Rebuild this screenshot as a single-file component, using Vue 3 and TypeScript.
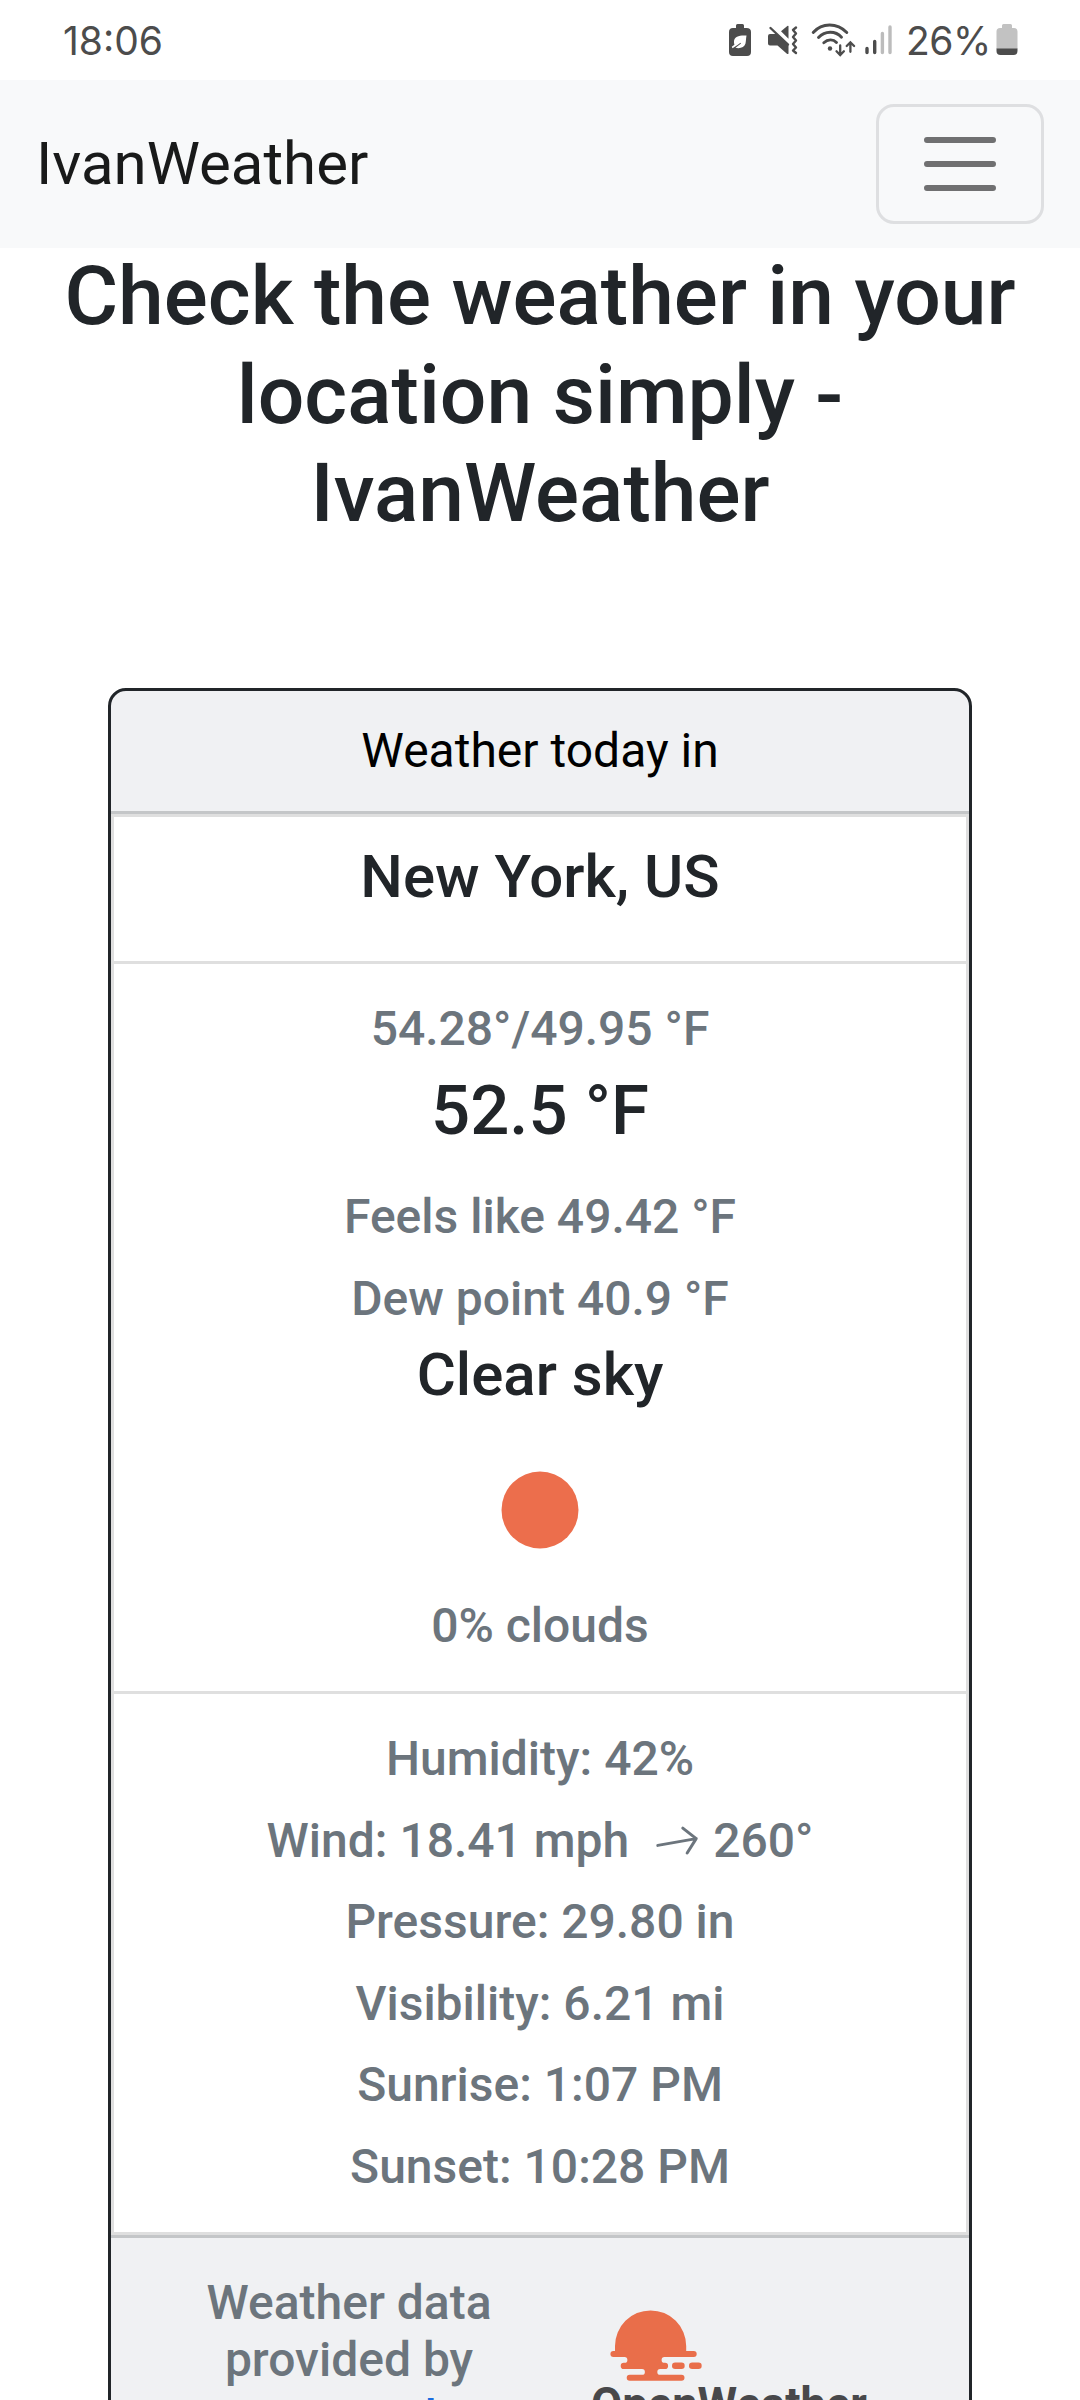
<script setup lang="ts">
const temperatures: string[] = ['Feels like 49.42 °F', 'Dew point 40.9 °F']
const sunTimes: string[] = [
  'Pressure: 29.80 in',
  'Visibility: 6.21 mi',
  'Sunrise: 1:07 PM',
  'Sunset: 10:28 PM',
]
</script>

<template>
  <div class="screen">
    <div class="status">
      <span class="clock">18:06</span>
      <svg class="status-icons" width="176" height="40" viewBox="0 0 176 40" fill="none">
        <!-- battery saver -->
        <path
          fill="#4c4c4c"
          d="M10 4.500q0-1.500 1.500-1.500h5q1.500 0 1.500 1.500V7h2.500Q25 7 25 11v20q0 4-4 4H7q-4 0-4-4V11q0-4 4-4h3z"
        />
        <path fill="#fff" d="M20.500 14.500c-7-.5-12 1-12.500 5.500-.1 1.500 0 2.700.4 3.800l-2.600 2 .7 1.400 5-3.200 3-2.300.5.800-5.500 4.300c4.500 1.200 9-.5 10-4.300.6-2.500.4-5 1-8z" />
        <g transform="translate(2 0)">
          <!-- muted, vibrating -->
          <path fill="#4c4c4c" d="M42 13h6.500L60.500 23.500V32.500q-.6 1-1.600.2L49.500 24.500H42q-2 0-2-2V15q0-2 2-2z" />
          <path fill="#4c4c4c" d="M53 10.200L59.300 5q1.200-.6 1.200.6v12.200z" />
          <path stroke="#4c4c4c" stroke-width="2.400" stroke-linecap="round" d="M42.500 7L60 23.500" />
          <path stroke="#4c4c4c" stroke-width="2.400" stroke-linecap="round" stroke-linejoin="round" d="M68 6.500l-3 2.500 3 3.500-3 3.500 3 3.500-3 3.500 3 3.500-3 3 3 2.500" />
          <!-- wifi -->
          <g stroke="#4c4c4c" stroke-width="2.900" stroke-linecap="round">
            <path d="M85.200 11.500C94 1.500 109 1.500 118.800 11.500" />
            <path d="M90.500 16.500c6.500-7 17-7 23-.3" />
            <path d="M95.800 21.700c4-3.700 9.500-3.700 12.700-.3" />
            <path stroke-width="2.300" d="M112.200 24.500v9m-3.700-3.200l3.700 3.700 3.700-3.700M122.400 30.800v-9m-3.700 3.200l3.700-3.700 3.700 3.700" />
          </g>
          <circle cx="102" cy="27.500" r="2.200" fill="#4c4c4c" />
          <!-- signal -->
          <g stroke-width="3.400" stroke-linecap="round">
            <path stroke="#4c4c4c" d="M139 27.500v4M146.700 20.500v11" />
            <path stroke="#bcbcbc" d="M154.400 12.500v19M162 6v25.500" />
          </g>
        </g>
      </svg>
      <span class="percent">26%</span>
      <svg class="battery" width="22" height="32" viewBox="0 0 22 32">
        <path
          fill="#c2c2c2"
          d="M6 1.500Q6 0 7.500 0h7Q16 0 16 1.500V4h2Q21.500 4 21.500 7.500V25h-21V7.500Q.5 4 4 4h2z"
        />
        <path fill="#4c4c4c" d="M.5 24.500h21V27q0 4-4 4h-13q-4 0-4-4z" />
      </svg>
    </div>

    <nav class="navbar">
      <span class="brand">IvanWeather</span>
      <button class="toggler" type="button" aria-label="Toggle navigation">
        <svg width="90" height="90" viewBox="0 0 30 30">
          <path
            stroke="rgba(0,0,0,.55)"
            stroke-linecap="round"
            stroke-miterlimit="10"
            stroke-width="2"
            d="M4 7h22M4 15h22M4 23h22"
          />
        </svg>
      </button>
    </nav>

    <h1 class="title">Check the weather in your location simply - IvanWeather</h1>

    <section class="card">
      <header class="card-header">Weather today in</header>
      <div class="list">
        <div class="item">
          <h5 class="place">New York, US</h5>
        </div>
        <div class="item">
          <h6 class="muted">54.28°/49.95 °F</h6>
          <h3 class="temp">52.5 °F</h3>
          <h6 v-for="line in temperatures" :key="line" class="muted">{{ line }}</h6>
          <h5 class="place">Clear sky</h5>
          <svg class="sun" width="150" height="150" viewBox="0 0 150 150">
            <circle cx="75" cy="75" r="38.500" fill="#ec6e4c" />
          </svg>
          <h6 class="muted">0% clouds</h6>
        </div>
        <div class="item">
          <h6 class="muted">Humidity: 42%</h6>
          <h6 class="muted wind">
            <span>Wind: 18.41 mph</span>
            <svg class="arrow" width="48" height="48" viewBox="0 0 16 16">
              <path
                transform="rotate(-10 8 8)"
                fill="none"
                stroke="#6c757d"
                stroke-linecap="round"
                stroke-linejoin="round"
                d="M1.500 8h13M10.700 3.800l3.800 4.200-3.800 4.200"
              />
            </svg>
            <span>260°</span>
          </h6>
          <h6 v-for="line in sunTimes" :key="line" class="muted">{{ line }}</h6>
        </div>
      </div>
      <footer class="card-footer">
        <h6 class="muted credit">Weather data provided by <a class="link">OpenWeather</a></h6>
        <div class="logo">
          <svg class="logo-sun" width="92" height="72" viewBox="0 0 92 72" fill="#e96e4a">
            <path
              d="M5 41V36a35.600 35.600 0 0 1 71.200 0v5h7.500a3 3 0 0 1 0 6H54.500a2.900 2.900 0 0 0 0 5.800H55a3 3 0 0 1 0 6.200h-4.800a2.900 2.900 0 0 0 0 5.800h21.300a3 3 0 0 1 0 6H19.700a3 3 0 0 1 0-6H32a2.900 2.900 0 0 0 0-5.800H13.800a3.100 3.100 0 0 1 0-6.200H14.500a2.900 2.900 0 0 0 0-5.800H3.400a3 3 0 0 1 0-6z"
            />
            <rect x="62" y="52.500" width="12.700" height="6.500" rx="3.200" />
            <rect x="79" y="52.500" width="12.700" height="6.500" rx="3.200" />
          </svg>
          <span class="logo-text">OpenWeather</span>
        </div>
      </footer>
    </section>
  </div>
</template>

<style>
html,
body {
  background: #fff;
  overflow: hidden;
}
</style>

<style scoped>
.screen {
  width: 1080px;
  height: 2400px;
  overflow: hidden;
  background: #fff;
  font-family: Roboto, sans-serif;
  font-size: 48px;
  color: #212529;
}
.status {
  display: flex;
  align-items: center;
  height: 80px;
  box-sizing: border-box;
  padding-left: 63px;
  color: #4c4c4c;
  font-family: Inter, sans-serif;
}
.clock {
  width: 663px;
  font-size: 39px;
}
.status-icons {
  flex: none;
  margin-top: 2px;
}
.percent {
  width: 87px;
  margin-left: 4px;
  font-size: 39px;
  letter-spacing: -0.5px;
}
.battery {
  flex: none;
  margin-left: 3px;
}
.navbar {
  display: flex;
  align-items: center;
  justify-content: space-between;
  height: 168px;
  box-sizing: border-box;
  padding: 0 36px;
  background: #f8f9fa;
}
.brand {
  font-size: 60px;
  line-height: 90px;
  color: #191a1a;
}
.toggler {
  display: flex;
  align-items: center;
  justify-content: center;
  width: 168px;
  height: 120px;
  padding: 0;
  background: transparent;
  border: 3px solid #dedfe1;
  border-radius: 18px;
}
h1,
h3,
h5,
h6 {
  margin: 0;
  font-weight: 500;
  line-height: 1.2;
}
.title {
  height: 297px;
  margin-top: -1px;
  padding: 0 36px;
  font-size: 82.200px;
  text-align: center;
}
.card {
  display: flex;
  flex-direction: column;
  width: 864px;
  height: 1900px;
  box-sizing: border-box;
  margin: 144px auto 0;
  border: 3px solid #212529;
  border-radius: 18px;
  overflow: hidden;
  background: #f0f1f3;
  text-align: center;
}
.card-header {
  flex: none;
  padding: 24px 48px;
  line-height: 72px;
  color: #000;
  border-bottom: 3px solid #c4c6c8;
}
.list {
  flex: none;
  background: #fff;
  border: 3px solid #dfdfdf;
}
.item {
  display: flex;
  flex-direction: column;
  align-items: center;
  padding: 24px 48px;
}
.item + .item {
  border-top: 3px solid #dfdfdf;
}
.place {
  margin-bottom: 24px;
  font-size: 60px;
}
.temp {
  margin-bottom: 24px;
  font-size: 68.880px;
}
.muted {
  margin: 12px 0;
  font-size: 48px;
  color: #6c757d;
}
.wind {
  display: flex;
  align-items: center;
}
.arrow {
  margin: 4px 12px 0 24px;
}
.card-footer {
  display: flex;
  flex: 1;
  align-items: flex-start;
  padding: 24px 48px;
  border-top: 3px solid #c4c6c8;
}
.credit {
  width: 380px;
}
.link {
  color: #1a6de0;
  text-decoration: underline;
}
.logo {
  display: flex;
  flex-direction: column;
  align-items: flex-start;
  padding: 48px 0 0 52px;
}
.logo-sun {
  margin-left: 19px;
}
.logo-text {
  margin-top: -4px;
  font-size: 45.300px;
  font-weight: 700;
  line-height: 53px;
  color: #48484a;
}
</style>
